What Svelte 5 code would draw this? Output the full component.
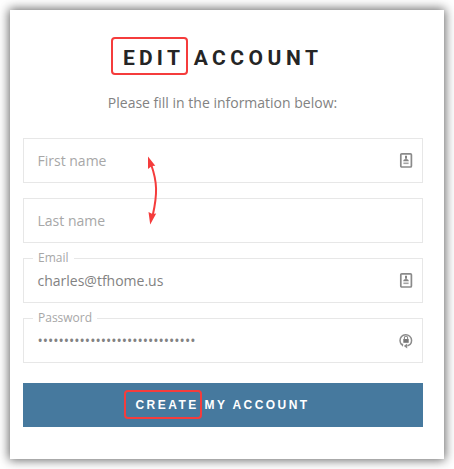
<script>
  const fields = [
    { label: 'First name', value: '', icon: 'card' },
    { label: 'Last name', value: '', icon: '' },
    { label: 'Email', value: 'charles@tfhome.us', icon: 'card' },
    { label: 'Password', value: '•'.repeat(30), icon: 'lock' }
  ];
</script>

<main>
  <section class="card">
    <h1><span class="word">EDIT<i class="mark title-mark"></i></span> <span class="rest">ACCOUNT</span></h1>
    <p class="intro">Please fill in the information below:</p>

    <form>
      {#each fields as field}
        <div class="field">
          {#if field.value}
            <span class="legend">{field.label}</span>
            <span class="value">{field.value}</span>
          {:else}
            <span class="placeholder">{field.label}</span>
          {/if}
          {#if field.icon === 'card'}
            <svg class="icon" width="16" height="18" viewBox="0 0 16 18">
              <rect x="2.8" y="2.8" width="10.6" height="13.2" rx="1" fill="#fff" stroke="#8a8a8a" stroke-width="1.7" />
              <path d="M8 4.8v3" stroke="#777" stroke-width="1.8" />
              <path d="M5.2 10.2c0-1.6 1.3-2.3 2.8-2.3s2.8.7 2.8 2.3z" fill="#858585" />
              <path d="M5.4 12.3h5.2" stroke="#a4a4a4" stroke-width="1.6" />
            </svg>
          {:else if field.icon === 'lock'}
            <svg class="icon" width="16" height="18" viewBox="0 0 16 18">
              <path d="M3.9 13.8A5.8 5.8 0 1 1 12.1 13.4L9.5 14.8" fill="none" stroke="#8c8c8c" stroke-width="1.5" />
              <path d="M1.8 12.6l3.5.2-.4 3M9.2 12.4v5.2l-3.4-2.6z" fill="#8c8c8c" />
              <rect x="5.3" y="8" width="5.4" height="3.8" fill="#777" />
              <path d="M6.4 8.4V6.8a1.6 1.6 0 0 1 3.2 0v1.6" fill="none" stroke="#888" stroke-width="1.1" />
            </svg>
          {/if}
        </div>
      {/each}
      <svg class="arrow" width="16" height="72" viewBox="0 0 16 72">
        <path d="M4.3 10C10.3 27 10.5 39 5.8 60" fill="none" stroke="#f53c3c" stroke-width="2" />
        <path d="M1 1.5L8.3 10.8L4.9 11L1 14zM3.2 69.5L1.5 57L5.4 59L9.2 58.5z" fill="#f53c3c" />
      </svg>
      <button type="button"><span class="word">CREATE<i class="mark button-mark"></i></span> <span>MY ACCOUNT</span></button>
    </form>
  </section>
</main>

<style>
  :global(body) {
    background: #fff;
  }
  main {
    box-sizing: border-box;
    width: 454px;
    height: 469px;
    padding: 10px;
    overflow: hidden;
    font-family: "Open Sans", sans-serif;
    font-size: 14px;
    color: #828282;
  }
  .card {
    box-sizing: border-box;
    width: 434px;
    height: 449px;
    padding: 34px 21px 0 13px;
    background: #fff;
    box-shadow: 0 0 10px 1px rgba(0, 0, 0, 0.62);
  }
  h1 {
    margin: 0;
    padding-left: 100px;
    font: bold 21px/28px Roboto, sans-serif;
    letter-spacing: 4.2px;
    word-spacing: 0.1px;
    color: #252525;
    white-space: nowrap;
  }
  .rest {
    letter-spacing: 4.5px;
  }
  .word {
    position: relative;
  }
  .mark {
    position: absolute;
    box-sizing: border-box;
    border: 2px solid #f53c3c;
    border-radius: 4px;
  }
  .title-mark {
    left: -12px;
    top: -9px;
    width: 77px;
    height: 38px;
  }
  .intro {
    margin: 20px 1px 25px 0;
    line-height: 21px;
    text-align: center;
  }
  form {
    display: flex;
    flex-direction: column;
    gap: 15px;
    position: relative;
  }
  .field {
    box-sizing: border-box;
    display: flex;
    align-items: center;
    justify-content: space-between;
    position: relative;
    height: 45px;
    padding: 0 8px 0 13.5px;
    border: 1px solid #e7e7e7;
  }
  .placeholder {
    color: #a7a7a7;
  }
  .legend {
    position: absolute;
    left: 9px;
    top: -10px;
    padding: 0 5px;
    background: #fff;
    color: #a7a7a7;
    font-size: 12px;
    line-height: 18px;
  }
  .icon {
    display: block;
    flex: none;
    margin-bottom: 2px;
  }
  .arrow {
    position: absolute;
    left: 124px;
    top: 17px;
  }
  button {
    height: 44px;
    margin: 5px 0 0;
    padding: 0 0 0 112.5px;
    border: 0;
    background: #46799e;
    color: #fff;
    font: bold 12px/44px "Liberation Sans", Arial, sans-serif;
    letter-spacing: 2.45px;
    text-align: left;
    white-space: nowrap;
  }
  .button-mark {
    left: -12px;
    top: -8px;
    width: 78px;
    height: 29px;
  }
</style>
